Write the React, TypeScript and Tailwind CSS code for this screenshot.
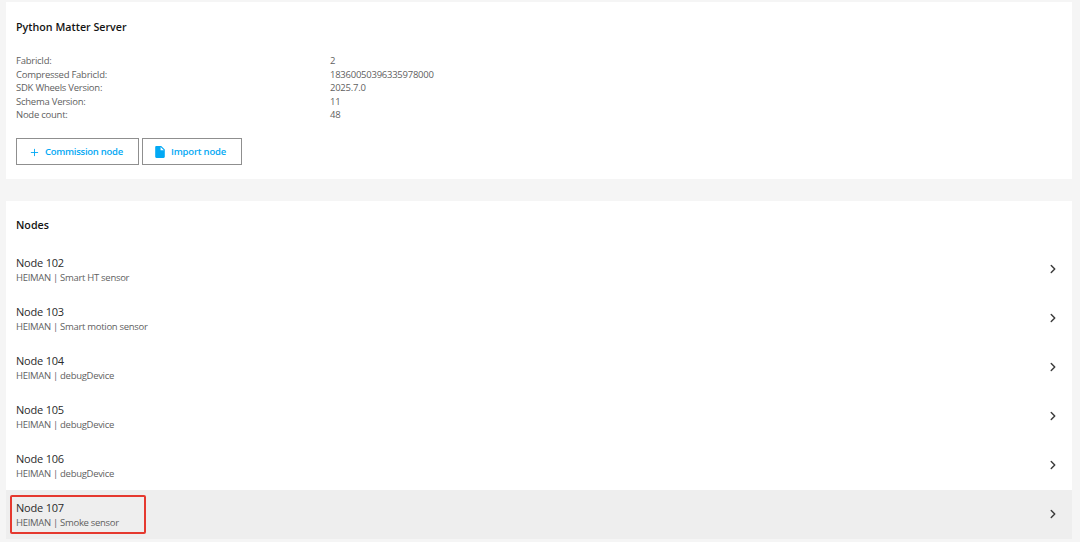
import { ChevronRight, Plus } from "lucide-react"

const info = [
    ["FabricId:", "2"],
    ["Compressed FabricId:", "18360050396335978000"],
    ["SDK Wheels Version:", "2025.7.0"],
    ["Schema Version:", "11"],
    ["Node count:", "48"],
]

const nodes = [
    ["Node 102", "HEIMAN | Smart HT sensor"],
    ["Node 103", "HEIMAN | Smart motion sensor"],
    ["Node 104", "HEIMAN | debugDevice"],
    ["Node 105", "HEIMAN | debugDevice"],
    ["Node 106", "HEIMAN | debugDevice"],
    ["Node 107", "HEIMAN | Smoke sensor"],
]

function FileIcon() {
    return (
        <svg width="10" height="12" viewBox="4 2 16 20" fill="#03a9f4">
            <path d="M6 2c-1.1 0-2 .9-2 2v16c0 1.1.9 2 2 2h12c1.1 0 2-.9 2-2V8l-6-6H6zm7 7V3.5L18.5 9H13z" />
        </svg>
    )
}

function App() {
    return (
        <div className="h-[542px] overflow-hidden bg-[#f5f5f5] pt-[2px] pl-[6px] pr-2 font-['Open_Sans','Noto_Sans',sans-serif]">
            <div className="h-[177px] bg-white px-[10px] pt-[18px]">
                <h2 className="text-[10.7px] leading-[15px] font-semibold text-[#141414]">Python Matter Server</h2>
                <div className="mt-[19px] text-[9.5px] leading-[13.6px] tracking-[-0.25px] text-[#5f5f5f]">
                    {info.map(([label, value]) => (
                        <div key={label} className="flex">
                            <span className="w-[314px]">{label}</span>
                            <span>{value}</span>
                        </div>
                    ))}
                </div>
                <div className="mt-[16px] flex gap-[3px]">
                    <button className="flex h-[27px] w-[123px] items-center border border-[#8f8f8f] pt-[2px] pl-[12px] text-[9.5px] font-semibold tracking-[-0.27px] text-[#03a9f4]">
                        <Plus size={11} strokeWidth={2} className="mr-[5px]" />
                        Commission node
                    </button>
                    <button className="flex h-[27px] w-[100px] items-center border border-[#8f8f8f] pt-[2px] pl-[12px] text-[9.5px] font-semibold tracking-[-0.2px] text-[#03a9f4]">
                        <span className="mr-[6px] flex"><FileIcon /></span>
                        Import node
                    </button>
                </div>
            </div>
            <div className="mt-[22px] bg-white">
                <h2 className="px-[10px] pt-[17px] pb-[12px] text-[10.7px] leading-[15px] font-semibold text-[#141414]">Nodes</h2>
                {nodes.map(([name, desc], i) => (
                    <div key={name} className={`relative flex h-[49px] items-center justify-between pr-[12px] pl-[10px] ${i === 5 ? "bg-[#eeeeee]" : ""}`}>
                        <div>
                            <div className="text-[11px] leading-[16px] tracking-[-0.2px] text-[#2b2b2b]">{name}</div>
                            <div className="text-[9.5px] leading-[14px] tracking-[-0.3px] text-[#5f5f5f]">{desc}</div>
                        </div>
                        <ChevronRight size={14} strokeWidth={2.5} className="mb-[2px] text-[#3c3c3c]" />
                        {i === 5 && <div className="absolute top-[5px] left-[4px] h-[39px] w-[136px] rounded-[2px] border-2 border-[#e5392f]" />}
                    </div>
                ))}
            </div>
        </div>
    )
}

export default App
